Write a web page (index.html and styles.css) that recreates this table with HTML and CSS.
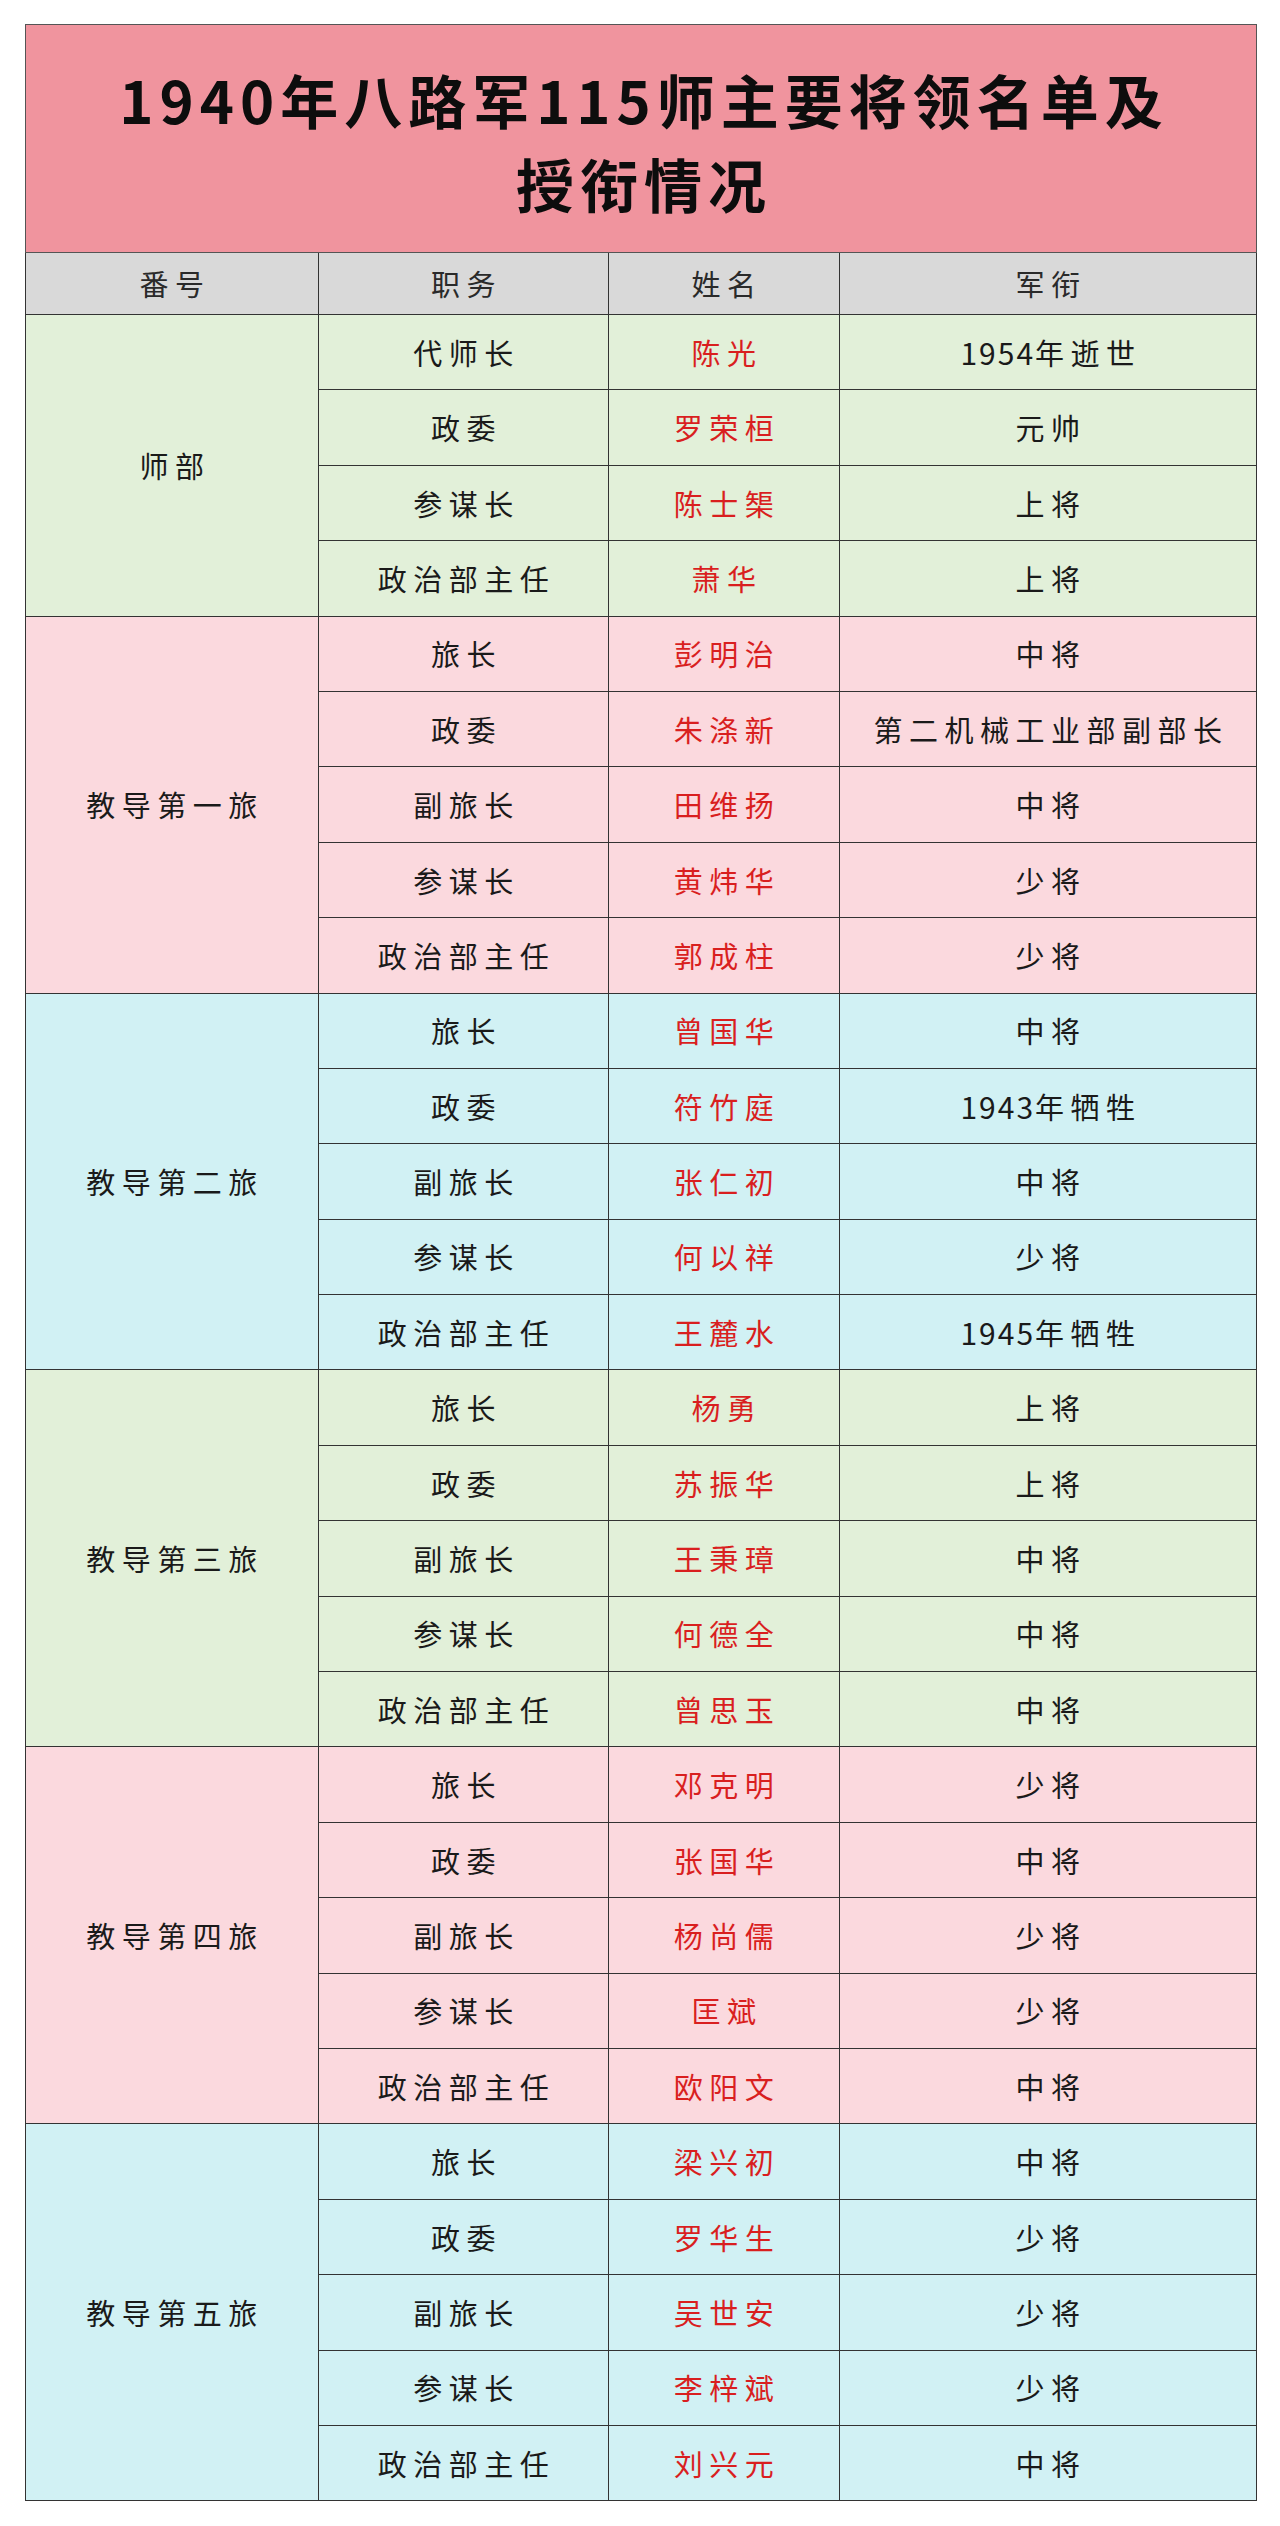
FILE: index.html
```html
<!DOCTYPE html>
<html lang="zh-CN">
<head>
<meta charset="utf-8">
<title>1940年八路军115师主要将领名单及授衔情况</title>
<link rel="stylesheet" href="styles.css">
</head>
<body>
<div class="page">
<table class="roster">
  <colgroup>
    <col class="c1"><col class="c2"><col class="c3"><col class="c4">
  </colgroup>
  <thead>
    <tr class="title-row"><th colspan="4" class="title">1940年八路军115师主要将领名单及<br>授衔情况</th></tr>
    <tr class="head-row"><th>番号</th><th>职务</th><th>姓名</th><th>军衔</th></tr>
  </thead>
  <tbody class="green">
    <tr><td rowspan="4" class="unit">师部</td><td>代师长</td><td class="name">陈光</td><td><span class="num">1954</span>年逝世</td></tr>
    <tr><td>政委</td><td class="name">罗荣桓</td><td>元帅</td></tr>
    <tr><td>参谋长</td><td class="name">陈士榘</td><td>上将</td></tr>
    <tr><td>政治部主任</td><td class="name">萧华</td><td>上将</td></tr>
  </tbody>
  <tbody class="pink">
    <tr><td rowspan="5" class="unit">教导第一旅</td><td>旅长</td><td class="name">彭明治</td><td>中将</td></tr>
    <tr><td>政委</td><td class="name">朱涤新</td><td>第二机械工业部副部长</td></tr>
    <tr><td>副旅长</td><td class="name">田维扬</td><td>中将</td></tr>
    <tr><td>参谋长</td><td class="name">黄炜华</td><td>少将</td></tr>
    <tr><td>政治部主任</td><td class="name">郭成柱</td><td>少将</td></tr>
  </tbody>
  <tbody class="cyan">
    <tr><td rowspan="5" class="unit">教导第二旅</td><td>旅长</td><td class="name">曾国华</td><td>中将</td></tr>
    <tr><td>政委</td><td class="name">符竹庭</td><td><span class="num">1943</span>年牺牲</td></tr>
    <tr><td>副旅长</td><td class="name">张仁初</td><td>中将</td></tr>
    <tr><td>参谋长</td><td class="name">何以祥</td><td>少将</td></tr>
    <tr><td>政治部主任</td><td class="name">王麓水</td><td><span class="num">1945</span>年牺牲</td></tr>
  </tbody>
  <tbody class="green">
    <tr><td rowspan="5" class="unit">教导第三旅</td><td>旅长</td><td class="name">杨勇</td><td>上将</td></tr>
    <tr><td>政委</td><td class="name">苏振华</td><td>上将</td></tr>
    <tr><td>副旅长</td><td class="name">王秉璋</td><td>中将</td></tr>
    <tr><td>参谋长</td><td class="name">何德全</td><td>中将</td></tr>
    <tr><td>政治部主任</td><td class="name">曾思玉</td><td>中将</td></tr>
  </tbody>
  <tbody class="pink">
    <tr><td rowspan="5" class="unit">教导第四旅</td><td>旅长</td><td class="name">邓克明</td><td>少将</td></tr>
    <tr><td>政委</td><td class="name">张国华</td><td>中将</td></tr>
    <tr><td>副旅长</td><td class="name">杨尚儒</td><td>少将</td></tr>
    <tr><td>参谋长</td><td class="name">匡斌</td><td>少将</td></tr>
    <tr><td>政治部主任</td><td class="name">欧阳文</td><td>中将</td></tr>
  </tbody>
  <tbody class="cyan">
    <tr><td rowspan="5" class="unit">教导第五旅</td><td>旅长</td><td class="name">梁兴初</td><td>中将</td></tr>
    <tr><td>政委</td><td class="name">罗华生</td><td>少将</td></tr>
    <tr><td>副旅长</td><td class="name">吴世安</td><td>少将</td></tr>
    <tr><td>参谋长</td><td class="name">李梓斌</td><td>少将</td></tr>
    <tr><td>政治部主任</td><td class="name">刘兴元</td><td>中将</td></tr>
  </tbody>
</table>
</div>
</body>
</html>
```
FILE: styles.css
```css
html, body {
  margin: 0;
  padding: 0;
  background: #ffffff;
}

.page {
  padding: 24px 0 0 25px;
}

.roster {
  width: 1231px;
  border-collapse: collapse;
  table-layout: fixed;
  font-family: "Noto Sans CJK SC", "Noto Sans", sans-serif;
  color: #1a1a1a;
}

.c1 { width: 293px; }
.c2 { width: 290px; }
.c3 { width: 231px; }
.c4 { width: 417px; }

.roster th,
.roster td {
  border: 1px solid #333333;
  text-align: center;
  vertical-align: middle;
  padding: 0 0 0 6px;
  font-size: 29px;
  font-weight: 400;
  letter-spacing: 6.5px;
  line-height: 1.2;
}

.roster .num {
  letter-spacing: 2px;
  font-size: 30px;
}

.title-row {
  height: 228px;
}

.roster th.title {
  background: #f0949e;
  border-color: #555555;
  font-size: 58px;
  font-weight: 700;
  letter-spacing: 6px;
  line-height: 84px;
  color: #0d0d0d;
  padding: 4px 0 0 6px;
}

.head-row {
  height: 62px;
}

.head-row th {
  background: #d9d9d9;
  color: #2a2a2a;
}

.roster tbody tr {
  height: 75.4px;
}

.green td { background: #e2f0d9; }
.pink td { background: #fbd9de; }
.cyan td { background: #d1f1f4; }

.roster td.name {
  color: #d91f1f;
}

.roster td.unit {
  color: #1a1a1a;
}
```
